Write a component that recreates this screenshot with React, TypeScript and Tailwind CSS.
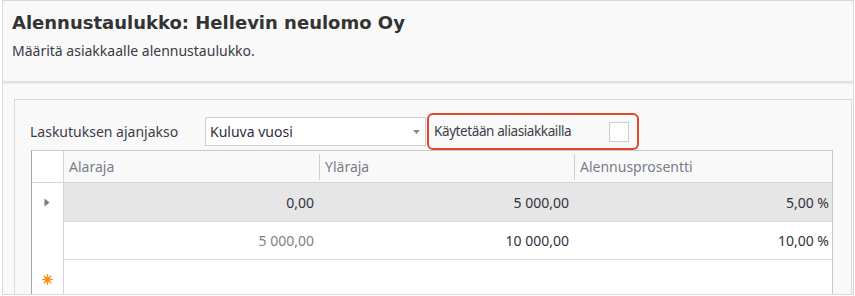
import React from 'react';

const ui = { fontFamily: '"Noto Sans", "Open Sans", sans-serif' };

type Row = { from: string; to: string; pct: string; selected?: boolean; readOnlyFrom?: boolean };

const rows: Row[] = [
    { from: '0,00', to: '5 000,00', pct: '5,00 %', selected: true },
    { from: '5 000,00', to: '10 000,00', pct: '10,00 %', readOnlyFrom: true },
];

const RowArrow = () => (
    <svg width="6" height="9" viewBox="0 0 6 9">
        <path d="M0.5 0.5 L5.5 4.5 L0.5 8.5 Z" fill="#7a7a7a" />
    </svg>
);

const NewRowStar = () => (
    <svg width="11" height="11" viewBox="0 0 11 11">
        <g stroke="#f7931e" strokeWidth="1.2" strokeLinecap="round">
            <line x1="5.5" y1="0.5" x2="5.5" y2="10.5" />
            <line x1="0.5" y1="5.5" x2="10.5" y2="5.5" />
            <line x1="2" y1="2" x2="9" y2="9" />
            <line x1="9" y1="2" x2="2" y2="9" />
        </g>
        <circle cx="5.5" cy="5.5" r="3" fill="#f7931e" />
    </svg>
);

export default function App() {
    return (
        <div className="w-[855px] h-[296px] bg-white overflow-hidden" style={ui}>
            <div className="ml-[2px] w-[852px] h-[295px] border border-[#d9d9d9] bg-[#f9f9f9] flex flex-col overflow-hidden">
                {/* header */}
                <div className="h-[82px] shrink-0 border-b-2 border-[#e1e1e1] px-[9px] pt-[10px]">
                    <h1
                        className="text-[18px] font-bold text-[#333333] leading-[24px]"
                        style={{ fontFamily: '"DejaVu Sans", Verdana, sans-serif' }}
                    >
                        Alennustaulukko: Hellevin neulomo Oy
                    </h1>
                    <p className="mt-[6px] text-[14px] text-[#3a3a44] leading-[20px]">
                        Määritä asiakkaalle alennustaulukko.
                    </p>
                </div>

                {/* content */}
                <div className="flex-1 pl-[11px] pr-[1px] pt-[15px] border-t border-[#ededed]">
                    <div className="h-full border border-[#dadada] border-b-0 pl-[16px] pr-[16px] pt-[13px]">
                        {/* filter row */}
                        <div className="flex items-center h-[37px]">
                            <span className="text-[14px] text-[#3c3c48] ml-[-1px] w-[175px]">Laskutuksen ajanjakso</span>
                            <div className="w-[221px] h-[29px] bg-white border border-[#cfcfcf] flex items-center justify-between pl-[4px] pr-[5px]">
                                <span className="text-[14px] text-[#2e2e3a]">Kuluva vuosi</span>
                                <svg width="7" height="4" viewBox="0 0 7 4">
                                    <path d="M0 0 L7 0 L3.5 4 Z" fill="#8a8a8a" />
                                </svg>
                            </div>
                            <div className="ml-[1px] w-[212px] h-[37px] border-2 border-[#e0462e] rounded-[6px] flex items-center pl-[5px] pr-[8px] justify-between">
                                <span className="text-[13.5px] tracking-[-0.4px] text-[#3c3c48]">Käytetään aliasiakkailla</span>
                                <span className="w-[20px] h-[20px] bg-white border border-[#cdcdcd]" />
                            </div>
                        </div>

                        {/* grid */}
                        <div className="w-[802px] border-l border-t border-r border-l-[#a8a8a8] border-t-[#cacaca] border-r-[#cacaca] bg-white text-[14px]">
                            <div className="grid grid-cols-[32px_255px_255px_1fr] h-[32px] bg-[#f9f9f9] border-b border-[#d5d5d5]">
                                <div className="border-r border-[#d5d5d5] bg-white" />
                                <div className="flex items-center pl-[5px] text-[#7c7c8a]">Alaraja</div>
                                <div className="flex items-center">
                                    <span className="w-px h-[26px] bg-[#cfcfcf] mr-[5px]" />
                                    <span className="text-[#7c7c8a]">Yläraja</span>
                                </div>
                                <div className="flex items-center">
                                    <span className="w-px h-[26px] bg-[#cfcfcf] mr-[5px]" />
                                    <span className="text-[#7c7c8a]">Alennusprosentti</span>
                                </div>
                            </div>
                            {rows.map((r, i) => (
                                <div
                                    key={i}
                                    className={
                                        'grid grid-cols-[32px_255px_255px_1fr] ' + (i === 0 ? 'h-[39px]' : 'h-[38px]')
                                    }
                                >
                                    <div className="border-r border-[#d5d5d5] flex items-center justify-center pr-[1px]">
                                        {r.selected && <RowArrow />}
                                    </div>
                                    <div
                                        className={
                                            'flex items-center justify-end pr-[5px] border-b border-[#d9d9d9] ' +
                                            (r.selected ? 'bg-[#e6e6e6] ' : '') +
                                            (r.readOnlyFrom ? 'text-[#80808a]' : 'text-[#333340]')
                                        }
                                    >
                                        {r.from}
                                    </div>
                                    <div
                                        className={
                                            'flex items-center justify-end pr-[5px] border-b border-[#d9d9d9] text-[#333340] ' +
                                            (r.selected ? 'bg-[#e6e6e6]' : '')
                                        }
                                    >
                                        {r.to}
                                    </div>
                                    <div
                                        className={
                                            'flex items-center justify-end pr-[3px] border-b border-[#d9d9d9] text-[#333340] ' +
                                            (r.selected ? 'bg-[#e6e6e6]' : '')
                                        }
                                    >
                                        {r.pct}
                                    </div>
                                </div>
                            ))}
                            <div className="grid grid-cols-[32px_1fr] h-[40px]">
                                <div className="border-r border-[#d5d5d5] flex items-start justify-center pt-[14px] pr-[1px]">
                                    <NewRowStar />
                                </div>
                                <div />
                            </div>
                        </div>
                    </div>
                </div>
            </div>
        </div>
    );
}
